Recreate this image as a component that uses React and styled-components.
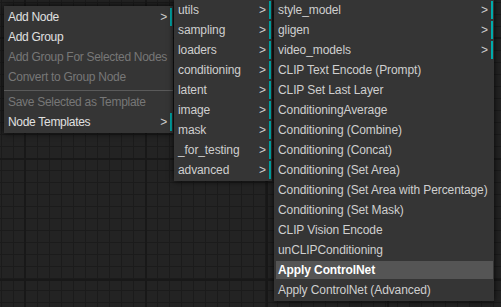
import React from "react";
import styled, { createGlobalStyle } from "styled-components";

const GlobalStyle = createGlobalStyle`
  html, body {
    margin: 0;
    padding: 0;
    background: #232323;
  }
`;

const Canvas = styled.div`
  position: relative;
  width: 501px;
  height: 307px;
  overflow: hidden;
  background-color: #232323;
  background-image:
    repeating-linear-gradient(90deg, transparent 0 24px, #181818 24px 26px, transparent 26px 121px),
    repeating-linear-gradient(0deg, transparent 0 26px, #181818 26px 28px, transparent 28px 121px),
    repeating-linear-gradient(90deg, #1b1b1b 0 1px, transparent 1px 12px),
    repeating-linear-gradient(180deg, transparent 0 2px, #1b1b1b 2px 3px, transparent 3px 12px);
  background-position: 0 0, 0 0, 1px 0, 0 0;
  font-family: "Liberation Sans", Arial, sans-serif;
  font-size: 12px;
`;

const Menu = styled.div`
  position: absolute;
  left: ${(p) => p.$left}px;
  top: ${(p) => p.$top}px;
  width: ${(p) => p.$width}px;
  box-sizing: border-box;
  padding: 2px 1px 2px 2px;
  display: flex;
  flex-direction: column;
  gap: 2px;
  background: #353535;
  box-shadow: 0 0 6px rgba(0, 0, 0, 0.9);
  letter-spacing: ${(p) => p.$spacing}px;
`;

const Entry = styled.div`
  display: flex;
  align-items: center;
  justify-content: space-between;
  height: 18px;
  line-height: 18px;
  padding: 0 0 0 2px;
  box-sizing: border-box;
  white-space: nowrap;
  overflow: hidden;
  color: ${(p) => (p.$disabled ? "#777" : p.$bright ? "#e0e0e0" : "#cfcfcf")};
  font-weight: ${(p) => (p.$active ? "bold" : "normal")};
  background: ${(p) => (p.$active ? "#555" : "transparent")};
  border-right: 2px solid ${(p) => (p.$sub ? "#00aaaa" : "transparent")};
  ${(p) => p.$active && "color: #fff;"}
`;

const Arrow = styled.span`
  padding-right: 3px;
  color: #cfcfcf;
`;

const Separator = styled.div`
  height: 1px;
  margin: 2px 0 0 -2px;
  background: #5a5a5a;
  width: calc(100% + 3px);
`;

const mainItems = [
  { label: "Add Node", sub: true },
  { label: "Add Group" },
  { label: "Add Group For Selected Nodes", disabled: true },
  { label: "Convert to Group Node", disabled: true },
  { sep: true },
  { label: "Save Selected as Template", disabled: true },
  { label: "Node Templates", sub: true },
];

const categories = [
  "utils",
  "sampling",
  "loaders",
  "conditioning",
  "latent",
  "image",
  "mask",
  "_for_testing",
  "advanced",
].map((label) => ({ label, sub: true }));

const conditioning = [
  { label: "style_model", sub: true },
  { label: "gligen", sub: true },
  { label: "video_models", sub: true },
  { label: "CLIP Text Encode (Prompt)" },
  { label: "CLIP Set Last Layer" },
  { label: "ConditioningAverage" },
  { label: "Conditioning (Combine)" },
  { label: "Conditioning (Concat)" },
  { label: "Conditioning (Set Area)" },
  { label: "Conditioning (Set Area with Percentage)" },
  { label: "Conditioning (Set Mask)" },
  { label: "CLIP Vision Encode" },
  { label: "unCLIPConditioning" },
  { label: "Apply ControlNet", active: true },
  { label: "Apply ControlNet (Advanced)" },
];

const ContextMenu = ({ items, left, top, width, bright, spacing = -0.1 }) => (
  <Menu $left={left} $top={top} $width={width} $spacing={spacing}>
    {items.map((item, i) =>
      item.sep ? (
        <Separator key={i} />
      ) : (
        <Entry
          key={i}
          $sub={item.sub}
          $disabled={item.disabled}
          $active={item.active}
          $bright={bright}
        >
          <span>{item.label}</span>
          {item.sub && <Arrow>&gt;</Arrow>}
        </Entry>
      )
    )}
  </Menu>
);

export default function App() {
  return (
    <>
      <GlobalStyle />
      <Canvas>
        <ContextMenu items={mainItems} left={4} top={6} width={169} bright spacing={-0.3} />
        <ContextMenu items={categories} left={174} top={-1} width={98} />
        <ContextMenu items={conditioning} left={274} top={-1} width={220} />
      </Canvas>
    </>
  );
}
